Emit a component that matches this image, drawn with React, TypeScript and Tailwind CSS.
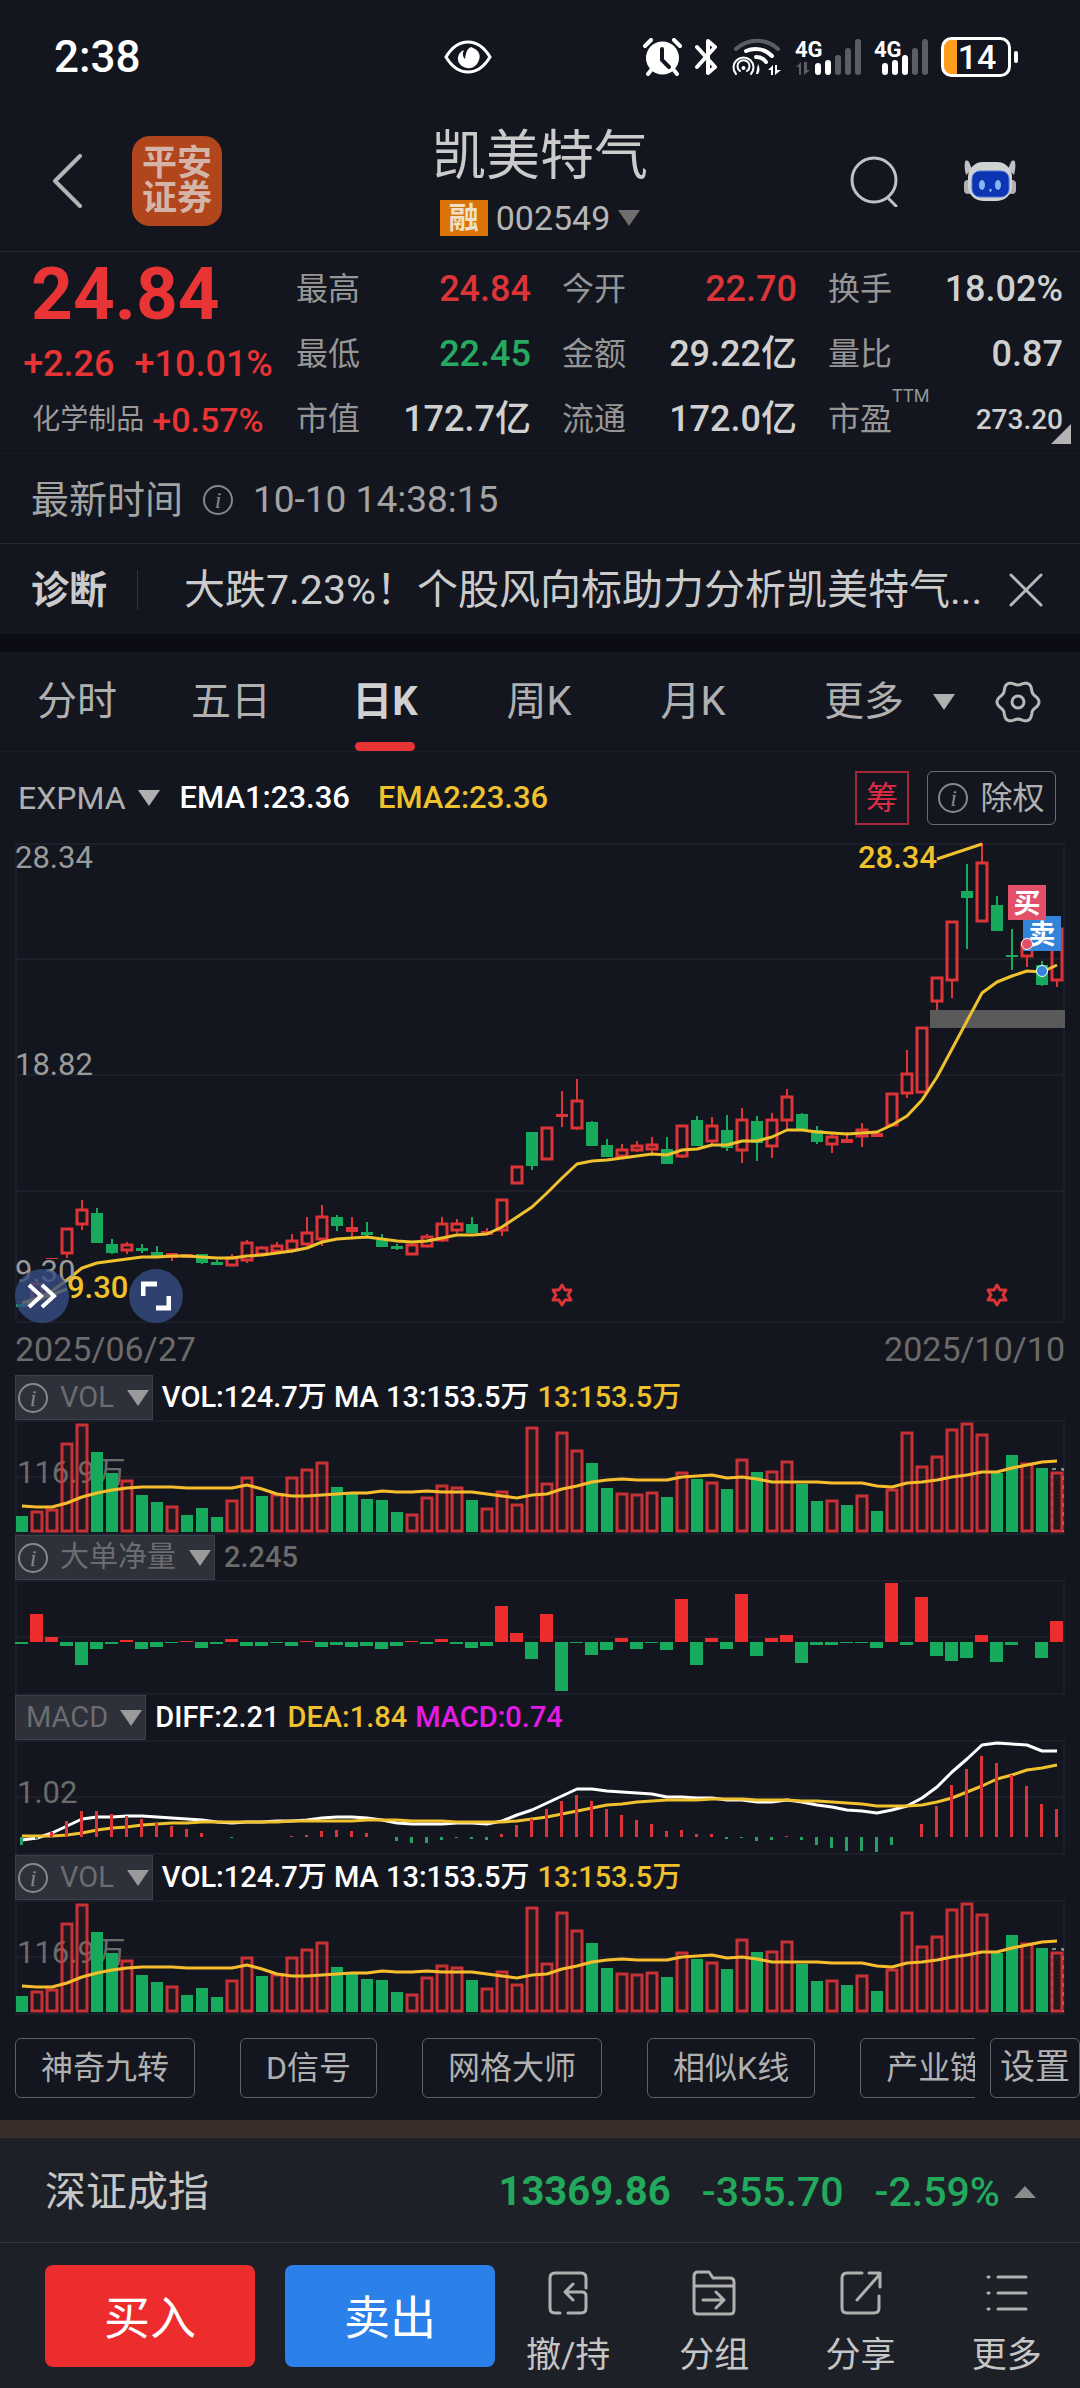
import type { ReactNode } from 'react'
import { clsx } from 'clsx'

const RED = '#dc3437'
const GREEN = '#18aa5c'
const GOLD = '#efc12c'
const STEP = 15

type Candle = [color: 'r' | 'g', top: number, bottom: number, high: number, low: number]

// body top, body bottom, high, low (chart units, 0 = top of the frame)
const candles: Candle[] = [
  ['g', 461, 464, 461, 464], ['r', 440, 456, 440, 456], ['r', 415, 416, 415, 416], ['r', 385, 411, 385, 415],
  ['r', 366, 382, 357, 387], ['g', 370, 400, 365, 400], ['g', 401, 410, 396, 411], ['r', 401, 408, 399, 411],
  ['g', 405, 408, 401, 410], ['g', 409, 413, 403, 414], ['r', 410, 415, 410, 418], ['r', 411, 415, 411, 415],
  ['g', 411, 420, 411, 421], ['g', 419, 422, 417, 422], ['r', 414, 423, 411, 423], ['r', 399, 418, 397, 420],
  ['r', 404, 412, 403, 412], ['r', 402, 409, 399, 411], ['r', 397, 408, 391, 410], ['r', 389, 402, 374, 403],
  ['r', 373, 397, 362, 403], ['g', 374, 383, 372, 388], ['r', 384, 389, 374, 394], ['g', 389, 392, 379, 395],
  ['g', 397, 404, 391, 404], ['g', 403, 406, 401, 407], ['r', 401, 412, 401, 412], ['r', 393, 404, 391, 404],
  ['r', 380, 398, 374, 399], ['r', 380, 388, 376, 390], ['g', 381, 390, 374, 390], ['r', 388, 392, 385, 392],
  ['r', 356, 388, 356, 393], ['r', 323, 341, 323, 341], ['g', 289, 323, 289, 327], ['r', 284, 317, 284, 317],
  ['r', 271, 274, 248, 284], ['r', 257, 286, 236, 287], ['g', 279, 303, 278, 303], ['g', 302, 314, 296, 314],
  ['r', 306, 314, 301, 316], ['r', 302, 308, 298, 309], ['r', 301, 307, 294, 310], ['g', 306, 321, 294, 321],
  ['r', 282, 314, 282, 315], ['g', 277, 303, 273, 303], ['r', 282, 299, 274, 302], ['g', 287, 305, 272, 308],
  ['r', 276, 308, 265, 320], ['g', 278, 300, 273, 318], ['r', 276, 304, 270, 315], ['r', 253, 278, 246, 287],
  ['g', 271, 287, 270, 287], ['g', 287, 299, 283, 301], ['r', 293, 302, 290, 310], ['r', 296, 300, 289, 300],
  ['r', 286, 294, 280, 304], ['r', 290, 294, 288, 294], ['r', 250, 283, 250, 283], ['r', 230, 251, 207, 255],
  ['r', 184, 250, 184, 250], ['r', 134, 159, 134, 167], ['r', 78, 138, 78, 155], ['g', 48, 55, 21, 106],
  ['r', 19, 79, 0, 79], ['g', 62, 88, 53, 88], ['g', 112, 114, 86, 127], ['r', 100, 114, 100, 124],
  ['g', 122, 142, 118, 143], ['r', 85, 138, 85, 144],
]

const ema = [
  460, 455, 448, 437, 425, 420, 418, 416, 414, 414, 413, 413, 414, 415, 415, 413, 412, 410, 408, 405, 399, 396, 395,
  394, 396, 398, 399, 398, 395, 392, 392, 391, 384, 374, 364, 350, 335, 321, 318, 317, 315, 313, 311, 312, 307, 306,
  302, 302, 298, 298, 294, 287, 287, 289, 290, 291, 290, 289, 282, 273, 257, 234, 206, 178, 150, 139, 133, 128, 129,
  122,
]

const volume = [
  16, 21, 23, 89, 108, 80, 59, 52, 37, 30, 26, 17, 24, 15, 32, 55, 36, 38, 55, 63, 70, 45, 40, 33, 32, 20, 18, 35, 47,
  45, 32, 24, 41, 28, 105, 49, 100, 82, 69, 44, 39, 38, 40, 35, 60, 53, 50, 43, 73, 60, 61, 71, 48, 31, 32, 27, 37,
  21, 43, 100, 66, 76, 103, 109, 98, 59, 77, 69, 64, 60,
]
const volumeColors = 'grrrrggrggrgggrrgrrrrgggggrrrrgrrrrrrrggrrrgrgrgrgrrggrgrgrrrrrrrggrgr'

const volumeMa = [
  86, 87, 87, 83, 77, 73, 70, 68, 67, 67, 67, 68, 68, 68, 68, 65, 69, 74, 76, 76, 75, 74, 73, 73, 71, 72, 72, 71, 72,
  72, 72, 74, 76, 78, 75, 74, 69, 66, 62, 60, 59, 60, 60, 60, 57, 56, 55, 58, 57, 59, 62, 62, 62, 62, 63, 63, 63, 66,
  67, 63, 62, 60, 57, 55, 52, 52, 48, 45, 42, 41,
]

const netFlow = [
  -2, 28, 5, -4, -23, -7, -2, 2, -7, -5, -1, 1, -6, -2, 3, -4, -4, -1, -4, 1, -5, -3, -5, -4, -7, -4, 1, -2, 3, -2, -6,
  -4, 36, 9, -17, 28, -49, -1, -13, -8, 4, -7, -1, -8, 43, -23, 4, -7, 48, -14, 4, 7, -21, -3, -3, -1, -1, -6, 59, -3,
  45, -14, -19, -16, 7, -20, -3, 0, -16, 21,
]

const macd = [
  -8, -2, 5, 16, 26, 26, 23, 21, 18, 14, 11, 8, 4, 0, -1, 0, 0, 0, 1, 2, 6, 7, 6, 4, 0, -4, -6, -6, -3, -1, -2, -3, 3,
  12, 18, 28, 36, 42, 36, 28, 22, 17, 13, 6, 7, 3, 3, -2, -1, -4, -3, 1, -3, -8, -11, -14, -14, -15, -8, 0, 13, 31,
  52, 68, 81, 74, 62, 51, 33, 28,
]

const diff = [
  100, 98, 93, 86, 79, 77, 77, 76, 76, 77, 78, 79, 80, 82, 83, 82, 82, 81, 81, 80, 78, 77, 77, 78, 80, 83, 84, 84, 84,
  83, 83, 84, 81, 75, 70, 63, 56, 49, 49, 51, 52, 53, 54, 57, 57, 58, 58, 60, 60, 62, 62, 60, 62, 65, 67, 70, 71, 73,
  70, 66, 58, 47, 32, 19, 5, 3, 4, 5, 11, 11,
]

const dea = [
  96, 96, 96, 95, 93, 90, 88, 87, 85, 84, 83, 83, 82, 82, 82, 82, 82, 82, 81, 81, 81, 81, 81, 80, 80, 80, 81, 81, 81,
  82, 82, 82, 82, 81, 79, 77, 74, 71, 68, 65, 64, 62, 61, 60, 60, 60, 59, 59, 59, 60, 60, 60, 61, 61, 62, 63, 64, 66,
  66, 66, 65, 62, 58, 52, 46, 39, 35, 30, 28, 25,
]

const cx = (i: number) => 7 + i * STEP
const toPoints = (values: number[]) => values.map((y, i) => `${cx(i)},${y}`).join(' ')

// six-lobed outline of the settings gear
const gearPoints = Array.from({ length: 72 }, (_, i) => {
  const a = (i * Math.PI) / 36
  const r = 19 + 2 * Math.cos(6 * a)
  return `${(23 + r * Math.cos(a)).toFixed(1)},${(23 + r * Math.sin(a)).toFixed(1)}`
}).join(' ')

function Caret({ className, up = false }: { className?: string; up?: boolean }) {
  return (
    <svg viewBox="0 0 22 16" className={clsx('w-[22px] shrink-0', className)} fill="currentColor" aria-hidden="true">
      <path d={up ? 'M0 14 11 2l11 12z' : 'M0 0h22L11 16z'} />
    </svg>
  )
}

function InfoIcon() {
  return (
    <span
      aria-hidden="true"
      className="flex size-[30px] shrink-0 items-center justify-center rounded-full border-2 border-[#85878c] font-['Liberation_Serif',serif] text-[24px] leading-[24px] font-normal text-[#85878c] italic"
    >
      i
    </span>
  )
}

function Signal({ bars, arrows = false }: { bars: number; arrows?: boolean }) {
  const heights = [12, 15, 20, 27, 36]
  return (
    <svg
      viewBox={arrows ? '0 0 66 38' : '0 0 54 38'}
      className={clsx('overflow-visible', arrows ? 'w-[66px]' : 'w-[54px]')}
      aria-hidden="true"
    >
      <text x="0" y="19" fill="#fff" fontSize="22" fontWeight="700">4G</text>
      {arrows && <path d="M1 29 6 24v13H4v-8zM9 24v13l6-5h-3v-8z" fill="#5b5d65" />}
      {heights.map((h, i) => (
        <rect
          key={i}
          x={(arrows ? 20 : 8) + i * 10}
          y={37 - h}
          width="6"
          height={h}
          rx="3"
          fill={i < bars ? '#fff' : '#5b5d65'}
        />
      ))}
    </svg>
  )
}

function StatusBar() {
  return (
    <div className="flex h-[110px] items-center pt-[4px] pr-[61px] pl-[54px] text-white">
      <span className="w-[390px] text-[44px] leading-[60px] font-medium">2:38</span>
      <svg viewBox="0 0 48 34" className="w-12" aria-hidden="true">
        <path d="M2 17C8 7 15 2 24 2s16 5 22 15c-6 10-13 15-22 15S8 27 2 17z" fill="none" stroke="#fff" strokeWidth="3" />
        <path d="M27 7c8 3 10 8 8 13-2 6-7 9-12 8-6-1-10-6-9-11 1-4 3-6 6-7-2 4-1 7 1 9 1-7 2-10 6-12z" fill="#fff" />
      </svg>
      <div className="ml-auto flex items-center gap-[13px]">
        <svg viewBox="0 0 39 38" className="w-[39px]" aria-hidden="true">
          <g fill="none" stroke="#fff" strokeWidth="4" strokeLinecap="round">
            <path d="M2 8 8 2M37 8l-6-6M9 31l-4 5M30 31l4 5" />
          </g>
          <circle cx="19.500" cy="20" r="16.500" fill="#fff" />
          <path d="M19 11v11l7 7" fill="none" stroke="#13161f" strokeWidth="4" strokeLinecap="round" />
        </svg>
        <svg viewBox="0 0 24 38" className="w-6" aria-hidden="true">
          <path d="m2 9 18 20-7 6V3l7 6L2 29" fill="none" stroke="#fff" strokeWidth="4" strokeLinecap="round" strokeLinejoin="round" />
        </svg>
        <svg viewBox="0 0 50 38" className="w-[50px]" fill="none" strokeLinecap="round" aria-hidden="true">
          <path d="M4 11C16 0 34 0 46 11" stroke="#5b5d65" strokeWidth="4" />
          <path d="M14 13c9-4 19-2 26 5" stroke="#fff" strokeWidth="4" />
          <path d="M24 19c4 0 8 2 10 5" stroke="#fff" strokeWidth="4" />
          <path d="M4 36a10 10 0 1 1 15 0M8 33a6 6 0 1 1 7 0" stroke="#fff" strokeWidth="2" />
          <circle cx="11.500" cy="30" r="2" fill="#fff" />
          <path d="M26 26c2 4 2 7 0 10h-2z" fill="#fff" />
          <path d="m36 32 5-5v10h-2v-5zM43 27v10l6-5h-4v-5z" fill="#fff" />
        </svg>
        <Signal bars={2} arrows />
        <Signal bars={3} />
        <svg viewBox="0 0 78 40" className="w-[78px]" aria-hidden="true">
          <path d="M3 9q0-6 6-6h7v34H9q-6 0-6-6z" fill="#ff9d1e" />
          <rect x="1.500" y="1.500" width="67" height="37" rx="9" fill="none" stroke="#fff" strokeWidth="3" />
          <rect x="73" y="14" width="4" height="12" rx="2" fill="#fff" />
          <text x="36" y="32" textAnchor="middle" fill="#fff" fontSize="34" fontWeight="500">14</text>
        </svg>
      </div>
    </div>
  )
}

function Robot() {
  return (
    <svg viewBox="0 0 52 42" className="w-[52px]" aria-hidden="true">
      <path d="M1 2c0-2 3-2 4 0l3 7-6 6C1 11 0 6 1 2zM51 2c0-2-3-2-4 0l-3 7 6 6c1-4 2-9 1-13z" fill="#bfc1c5" />
      <rect x="0" y="20" width="8" height="14" rx="4" fill="#b3b0b3" />
      <rect x="44" y="20" width="8" height="14" rx="4" fill="#b3b0b3" />
      <rect x="4" y="2" width="44" height="39" rx="15" fill="#d0d1d3" />
      <rect x="8" y="11" width="37" height="26" rx="8" fill="#0d34b4" stroke="#4a74d0" strokeWidth="1" />
      <ellipse cx="18" cy="25" rx="3" ry="5" fill="#83b6ee" />
      <ellipse cx="34" cy="25" rx="3" ry="5" fill="#83b6ee" />
      <path d="M25 29h3l-1 3h-1z" fill="#83b6ee" />
    </svg>
  )
}

function Header() {
  return (
    <header className="flex items-center border-b border-[#282b34] px-[51px] py-[15px]">
      <div className="flex flex-1 items-center gap-[49px] pr-[13px]">
        <button aria-label="返回">
          <svg viewBox="0 0 32 54" className="w-8" fill="none" stroke="#b4b4b4" strokeWidth="4" strokeLinecap="round" strokeLinejoin="round">
            <path d="M29 2 4 27l25 25" />
          </svg>
        </button>
        <div className="flex size-[90px] items-center justify-center rounded-[18px] bg-[#b1451c] text-[#d4b4a8]">
          <span className="w-[70px] text-[35px] leading-[35px] font-bold break-all whitespace-normal">平安证券</span>
        </div>
      </div>
      <div className="flex flex-col items-center gap-[11px]">
        <h1 className="text-[54px] leading-[64px] text-[#cbcbcb]">凯美特气</h1>
        <button className="flex h-[36px] items-center gap-2">
          <span className="flex h-[36px] w-[48px] items-center justify-center bg-[#da7409] text-[30px] leading-[36px] font-bold text-[#eee0c6]">融</span>
          <span className="text-[34px] leading-[36px] text-[#b6b6b6]">002549</span>
          <Caret className="text-[#6f6f6f]" />
        </button>
      </div>
      <div className="flex flex-1 items-center justify-end gap-[66px] pr-[13px]">
        <button aria-label="搜索">
          <svg viewBox="0 0 48 52" className="w-12" fill="none" stroke="#bfc1c5" strokeWidth="3" strokeLinecap="round">
            <circle cx="24" cy="25" r="22" />
            <path d="m38 43 8 8" />
          </svg>
        </button>
        <button aria-label="智能助手"><Robot /></button>
      </div>
    </header>
  )
}

const stats = [
  { label: '最高', value: '24.84', tone: 'text-[#dc3437]' },
  { label: '今开', value: '22.70', tone: 'text-[#dc3437]' },
  { label: '换手', value: '18.02%' },
  { label: '最低', value: '22.45', tone: 'text-[#26a961]' },
  { label: '金额', value: '29.22亿' },
  { label: '量比', value: '0.87' },
  { label: '市值', value: '172.7亿' },
  { label: '流通', value: '172.0亿' },
  { label: '市盈', value: '273.20', sup: 'TTM' },
]

function Quote() {
  return (
    <section className="relative flex border-b border-[#191c25] pt-[5px] pr-[17px] pb-px">
      <div className="w-[296px] shrink-0 text-[#e83434]">
        <div className="pl-[31px] text-[73px] leading-[75px] font-bold">24.84</div>
        <div className="flex justify-center gap-5 text-[36px] leading-[65px] font-medium">
          <span>+2.26</span>
          <span>+10.01%</span>
        </div>
        <div className="flex items-center justify-center gap-2 text-[34px] leading-[46px] font-medium">
          <span className="text-[28px] font-normal text-[#9a9a9a]">化学制品</span>
          <span>+0.57%</span>
        </div>
      </div>
      <dl className="grid flex-1 grid-cols-3 gap-x-[31px]">
        {stats.map((s) => (
          <div key={s.label} className="flex items-center justify-between leading-[65px]">
            <dt className="relative text-[32px] text-[#969696]">
              {s.label}
              {s.sup && <span className="absolute top-0 left-full text-[18px] leading-[18px]">{s.sup}</span>}
            </dt>
            <dd className={clsx('font-medium', s.sup ? 'text-[28px]' : 'text-[36px]', s.tone ?? 'text-[#d0d0d0]')}>
              {s.value}
            </dd>
          </div>
        ))}
      </dl>
      <svg viewBox="0 0 20 20" className="absolute right-[9px] bottom-[9px] w-5" aria-hidden="true">
        <path d="M20 0v20H0z" fill="#b4b4b4" />
      </svg>
    </section>
  )
}

const tabs = ['分时', '五日', '日K', '周K', '月K']

function Tabs() {
  return (
    <nav className="flex h-[100px] items-center border-b border-[#191c25] pr-[39px] text-[40px] leading-[60px] text-[#b0b0b0]">
      <div className="grid h-full w-[770px] grid-cols-5">
        {tabs.map((tab) => {
          const active = tab === '日K'
          return (
            <button key={tab} className={clsx('relative', active && 'font-bold text-[#d0d0d0]')}>
              {tab}
              {active && <span className="absolute bottom-0 left-1/2 h-[9px] w-[60px] -translate-x-1/2 rounded-full bg-[#e83434]" />}
            </button>
          )
        })}
      </div>
      <button className="ml-auto flex items-center gap-[29px]">
        更多
        <Caret />
      </button>
      <button aria-label="设置" className="ml-[40px]">
        <svg viewBox="0 0 46 46" className="w-[46px]" fill="none" stroke="#b8b8b8" strokeWidth="3" strokeLinejoin="round">
          <polygon points={gearPoints} />
          <circle cx="23" cy="23" r="6" />
        </svg>
      </button>
    </nav>
  )
}

function Star({ x }: { x: number }) {
  return (
    <path
      transform={`translate(${x} 452)`}
      d="M0-10 3-5l6 0-3 5 3 5-6 0-3 5-3-5-6 0 3-5-3-5 6 0z"
      fill="none"
      stroke={RED}
      strokeWidth="3"
      strokeLinejoin="round"
    />
  )
}

function CandleMark({ candle, i }: { candle: Candle; i: number }) {
  const [color, top, bottom, high, low] = candle
  const x = cx(i)
  const c = color === 'r' ? RED : GREEN
  const hollow = color === 'r' && bottom - top > 5
  return (
    <g stroke={c} strokeWidth="2">
      {high < top && <path d={`M${x} ${high}V${top}`} />}
      {low > bottom && <path d={`M${x} ${bottom}V${low}`} />}
      {hollow ? (
        <rect x={x - 5} y={top + 1} width="10" height={bottom - top - 2} fill="none" strokeWidth="3" />
      ) : (
        <rect x={x - 6} y={top} width="12" height={bottom - top} fill={c} stroke="none" />
      )}
    </g>
  )
}

function KLineChart() {
  return (
    <div className="relative">
      <svg viewBox="0 0 1050 480" className="block w-full overflow-visible">
        <g fill="none" stroke="#1c1f29" strokeWidth="2">
          <path d="M1 1H1049V479H1zM0 116H1050M0 232H1050M0 348H1050" />
        </g>
        <rect x="915" y="167" width="135" height="18" fill="#5a5a5a" />
        {candles.map((candle, i) => <CandleMark key={i} candle={candle} i={i} />)}
        <polyline points={toPoints(ema)} fill="none" stroke={GOLD} strokeWidth="3" strokeLinejoin="round" />
        <path d="M12 461 52 446M922 16 967 1" stroke={GOLD} strokeWidth="3" />
        <g fontSize="31" fill="#9a9a9a">
          <text x="0" y="25">28.34</text>
          <text x="0" y="232">18.82</text>
          <text x="0" y="439">9.30</text>
        </g>
        <g fontSize="31" fontWeight="500" fill={GOLD}>
          <text x="922" y="25" textAnchor="end">28.34</text>
          <text x="52" y="455">9.30</text>
        </g>
        <Star x={547} />
        <Star x={982} />
        <rect x="1008" y="73" width="38" height="35" fill="#3583d8" />
        <rect x="993" y="42" width="38" height="35" fill="#e2506a" />
        <g fontSize="27" fontWeight="700" fill="#fff" textAnchor="middle">
          <text x="1027" y="101">卖</text>
          <text x="1012" y="70">买</text>
        </g>
        <g stroke="#fff" strokeWidth="1">
          <circle cx="1012" cy="101" r="5.500" fill="#e2506a" />
          <circle cx="1027" cy="128" r="5.500" fill="#3583d8" />
        </g>
      </svg>
      <button aria-label="展开" className="absolute bottom-0 left-0 flex size-[54px] items-center justify-center rounded-full bg-[#374e83]/80">
        <svg viewBox="0 0 30 26" className="w-[30px]" fill="none" stroke="#fff" strokeWidth="4">
          <path d="m2 2 12 11L2 24M15 2l12 11-12 11" />
        </svg>
      </button>
      <button aria-label="全屏" className="absolute bottom-0 left-[114px] flex size-[54px] items-center justify-center rounded-full bg-[#374e83]/80">
        <svg viewBox="0 0 30 30" className="w-[30px]" fill="none" stroke="#fff" strokeWidth="5">
          <path d="M2 15V3h14M28 15v12H15" />
        </svg>
      </button>
    </div>
  )
}

function Indicator({ name, info = true, header, children }: { name: string; info?: boolean; header: ReactNode; children: ReactNode }) {
  return (
    <section>
      <div className="flex h-[45px] items-center text-[29px] leading-[43px] font-medium">
        <button className="mr-[9px] flex h-full items-center border border-[#3d3f4b] bg-[#2e303a] pr-[3px] pl-[2px] font-normal text-[#6b6c70]">
          {info && <InfoIcon />}
          <span className={info ? 'mr-[13px] ml-[12px]' : 'mr-[12px] ml-[8px]'}>{name}</span>
          <Caret className="text-[#9a9a9a]" />
        </button>
        {header}
      </div>
      <svg viewBox="0 0 1050 115" className="block w-full">
        <path d="M1 1H1049V114H1zM0 57H1050" fill="none" stroke="#1c1f29" strokeWidth="2" />
        {children}
      </svg>
    </section>
  )
}

function VolumeIndicator() {
  return (
    <Indicator
      name="VOL"
      header={
        <p className="flex gap-[8px] text-white">
          <span>VOL:124.7万 MA 13:153.5万</span>
          <span className="text-[#efc12c]">13:153.5万</span>
        </p>
      }
    >
      <text x="2" y="63" fontSize="31" fill="#6b6b6b">116.9万</text>
      <path d="M1037 112V49h11v63" fill="none" stroke="#8a8a8a" strokeWidth="2" strokeDasharray="4 5" />
      {volume.map((h, i) =>
        volumeColors[i] === 'g' ? (
          <rect key={i} x={cx(i) - 6} y={112 - h} width="12" height={h} fill={GREEN} />
        ) : (
          <rect key={i} x={cx(i) - 5} y={113 - h} width="10" height={h - 2} fill="#dc3437" fillOpacity="0.08" stroke={RED} strokeWidth="3" strokeOpacity="0.9" />
        ),
      )}
      <polyline points={toPoints(volumeMa)} fill="none" stroke="#f8bd2c" strokeWidth="3" strokeLinejoin="round" />
    </Indicator>
  )
}

function NetFlowIndicator() {
  return (
    <Indicator name="大单净量" header={<span className="text-[#6b6b6b]">2.245</span>}>
      {netFlow.map((v, i) => (
        <rect
          key={i}
          x={cx(i) - 7}
          y={v > 0 ? 62 - v : 62}
          width="13"
          height={Math.abs(v)}
          fill={v > 0 ? '#ec2c2d' : GREEN}
        />
      ))}
    </Indicator>
  )
}

function MacdIndicator() {
  return (
    <Indicator
      name="MACD"
      info={false}
      header={
        <p className="flex gap-[8px] text-white">
          <span>DIFF:2.21</span>
          <span className="text-[#efc12c]">DEA:1.84</span>
          <span className="text-[#e51ae5]">MACD:0.74</span>
        </p>
      }
    >
      <text x="2" y="63" fontSize="31" fill="#6b6b6b">1.02</text>
      <polyline points={toPoints(diff)} fill="none" stroke="#fff" strokeWidth="3" strokeLinejoin="round" />
      <polyline points={toPoints(dea)} fill="none" stroke={GOLD} strokeWidth="3" strokeLinejoin="round" />
      {macd.map((v, i) => (
        <rect key={i} x={cx(i) - 2} y={v > 0 ? 97 - v : 97} width="3" height={Math.abs(v)} fill={v > 0 ? RED : '#27a065'} />
      ))}
    </Indicator>
  )
}

const tools = ['神奇九转', 'D信号', '网格大师', '相似K线', '产业链']

function Toolbar() {
  return (
    <div className="flex h-[105px] items-center pl-[15px] text-[32px] leading-[58px] text-[#b0b0b0]">
      <div className="flex w-0 flex-1 gap-[45px] overflow-hidden">
        {tools.map((tool) => (
          <button key={tool} className="h-[60px] shrink-0 rounded-md border border-[#5f6166] px-[25px]">{tool}</button>
        ))}
      </div>
      <button className="ml-[15px] h-[60px] w-[90px] shrink-0 rounded-md border border-[#5f6166] text-[35px]">设置</button>
    </div>
  )
}

const actions = [
  { label: '撤/持', icon: <path d="M42 19V9q0-5-5-5H11Q6 4 6 9v30q0 5 5 5h5M24 44h13q5 0 5-5V27q0-4-4-4H22m7-8-8 8 8 8" /> },
  { label: '分组', icon: <path d="M4 41V7q0-4 4-4h11l4 6h17q4 0 4 4v28q0 4-4 4H8q-4 0-4-4zM4 17h40M13 31h21m-8-8 8 8-8 8" /> },
  { label: '分享', icon: <path d="M25 4H10Q5 4 5 9v30q0 5 5 5h27q5 0 5-5V27M20 31 43 5M32 4h11v14" /> },
  { label: '更多', icon: <path d="M5 8h1M15 8h28M5 24h1M15 24h28M5 40h1M15 40h28" /> },
]

function BottomBar() {
  return (
    <footer className="bg-[#1e2028]">
      <button className="flex h-[106px] w-full items-center border-y border-[#353841] pt-[4px] pr-[44px] pl-[45px] text-[41px] leading-[60px] font-medium text-[#22a95d]">
        <span className="mr-auto font-normal text-[#c6c6c6]">深证成指</span>
        <span className="text-[40px] font-bold">13369.86</span>
        <span className="ml-[31px]">-355.70</span>
        <span className="ml-[31px]">-2.59%</span>
        <Caret up className="ml-[14px] text-[#8b8b8b]" />
      </button>
      <div className="flex h-[145px] items-center pl-[45px]">
        <button className="h-[102px] w-[210px] rounded-lg bg-[#ec2c2d] pt-[4px] text-[46px] leading-[60px] text-white">买入</button>
        <button className="ml-[30px] h-[102px] w-[210px] rounded-lg bg-[#2c80ea] pt-[4px] text-[46px] leading-[60px] text-white">卖出</button>
        <div className="grid flex-1 grid-cols-4 pt-[18px]">
          {actions.map((a) => (
            <button key={a.label} className="flex flex-col items-center gap-[14px] text-[35px] leading-[50px] text-[#c6c6c6]">
              <svg viewBox="0 0 48 48" className="w-12" fill="none" stroke="#b0b0b0" strokeWidth="3" strokeLinecap="round" strokeLinejoin="round" aria-hidden="true">
                {a.icon}
              </svg>
              {a.label}
            </button>
          ))}
        </div>
      </div>
    </footer>
  )
}

export default function App() {
  return (
    <div className="w-full overflow-hidden bg-[#13161f] font-['Roboto','Noto_Sans_CJK_SC',sans-serif] whitespace-nowrap">
      <StatusBar />
      <Header />
      <Quote />
      <div className="flex h-[90px] items-center gap-[20px] border-b border-[#282b34] pt-[2px] pl-[31px] text-[38px] leading-[60px] text-[#a4a4a4]">
        <span>最新时间</span>
        <InfoIcon />
        <time className="text-[37px]">10-10 14:38:15</time>
      </div>
      <div className="flex h-[90px] items-center pt-[2px] pr-[36px] pl-[31px] text-[41px] leading-[64px] text-[#cbcbcb]">
        <span className="text-[38px] font-bold">诊断</span>
        <span className="ml-[30px] h-[40px] w-px bg-[#32353f]" />
        <a href="#diagnosis" className="ml-[46px] w-0 flex-1 truncate">大跌7.23%！个股风向标助力分析凯美特气...</a>
        <button aria-label="关闭" className="ml-[20px]">
          <svg viewBox="0 0 36 36" className="w-9" fill="none" stroke="#b8b8b8" strokeWidth="3" strokeLinecap="round">
            <path d="m3 3 30 30M33 3 3 33" />
          </svg>
        </button>
      </div>
      <div className="h-[18px] bg-[#0b0c14]" />
      <Tabs />
      <div className="flex h-[91px] items-center pr-[24px] pl-[18px] text-[32px] leading-[50px]">
        <button className="flex items-center gap-[12px] text-[#b0b0b0]">
          EXPMA
          <Caret />
        </button>
        <span className="ml-[20px] text-[31px] font-medium text-white">EMA1:23.36</span>
        <span className="ml-[28px] text-[31px] font-medium text-[#efc12c]">EMA2:23.36</span>
        <button className="ml-auto size-[54px] border-2 border-[#a5283a] text-[#dd2b45]">筹</button>
        <button className="ml-[18px] flex h-[54px] w-[129px] items-center justify-center gap-[12px] rounded-md border border-[#6b6d72] text-[#b0b0b0]">
          <InfoIcon />
          除权
        </button>
      </div>
      <main className="px-[15px]">
        <KLineChart />
        <div className="flex h-[52px] items-center justify-between text-[34px] leading-[50px] text-[#6b6b6b]">
          <span>2025/06/27</span>
          <span>2025/10/10</span>
        </div>
        <VolumeIndicator />
        <NetFlowIndicator />
        <MacdIndicator />
        <VolumeIndicator />
      </main>
      <Toolbar />
      <div className="h-[17px] bg-[#382d27]" />
      <BottomBar />
    </div>
  )
}
